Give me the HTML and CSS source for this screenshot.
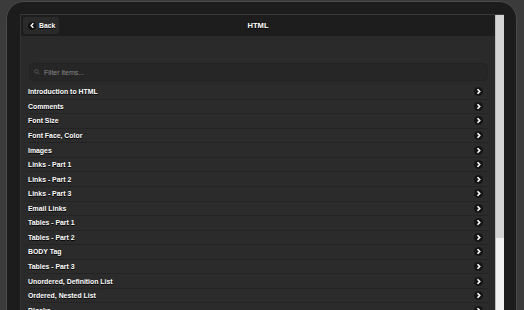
FILE: index.html
```html
<!DOCTYPE html>
<html>
<head>
    <meta http-equiv="Content-Type" content="text/html;charset=UTF-8"/>
    <title>HTML</title>
    <link rel="stylesheet" href="styles.css">
</head>
<body>
<div class="device">
    <div class="screen">
        <div class="main">
            <div class="header">
                <div class="back-btn">
                    <span class="icon-circle">
                        <svg width="7" height="7" viewBox="0 0 8 8"><path d="M5 1.5 L2.5 4 L5 6.5" fill="none" stroke="#fff" stroke-width="1.6"/></svg>
                    </span>
                    Back
                </div>
                <h1>HTML</h1>
            </div>
            <div class="content">
                <div class="filter">
                    <svg width="6" height="6" viewBox="0 0 10 10"><circle cx="4" cy="4" r="3" fill="none" stroke="#555" stroke-width="1.5"/><path d="M6.2 6.2 L9 9" stroke="#555" stroke-width="1.5"/></svg>
                    <span class="placeholder">Filter items...</span>
                </div>
                <ul class="list">
                    <li>Introduction to HTML</li>
                    <li>Comments</li>
                    <li>Font Size</li>
                    <li>Font Face, Color</li>
                    <li>Images</li>
                    <li>Links - Part 1</li>
                    <li>Links - Part 2</li>
                    <li>Links - Part 3</li>
                    <li>Email Links</li>
                    <li>Tables - Part 1</li>
                    <li>Tables - Part 2</li>
                    <li>BODY Tag</li>
                    <li>Tables - Part 3</li>
                    <li>Unordered, Definition List</li>
                    <li>Ordered, Nested List</li>
                    <li>Blocks</li>
                </ul>
            </div>
        </div>
        <div class="scrollbar"><div class="thumb"></div></div>
    </div>
</div>
</body>
</html>
```

FILE: styles.css
```css
body {
    margin: 0;
    background: #3a3b3a;
    font-family: "Liberation Sans", Arial, sans-serif;
    height: 310px;
    overflow: hidden;
}

.device {
    margin: 1px 7px 0 6px;
    height: 320px;
    background: #1c1c1c;
    border: 1px solid #4a4a4a;
    border-radius: 18px 18px 0 0;
    padding: 12px 12px 0 13px;
    box-sizing: border-box;
}

.screen {
    display: flex;
    height: 300px;
    border-top: 1px solid #3a3a3a;
    border-left: 1px solid #333;
    background: #2a2a2a;
    overflow: hidden;
}

.main {
    flex: 1;
}

.header {
    position: relative;
    height: 21px;
    background: #1d1d1d;
    display: flex;
    align-items: center;
    justify-content: center;
}

.header h1 {
    margin: 0;
    font-size: 7.6px;
    font-weight: bold;
    color: #fff;
    text-shadow: 0 1px 0 #000;
}

.back-btn {
    position: absolute;
    left: 2px;
    top: 2px;
    width: 36px;
    height: 17px;
    box-sizing: border-box;
    background: #2a2a2a;
    border-radius: 3px;
    display: flex;
    align-items: center;
    gap: 3px;
    padding-left: 5px;
    font-size: 6.8px;
    font-weight: bold;
    color: #fff;
    text-shadow: 0 1px 0 #000;
}

.icon-circle {
    width: 8px;
    height: 8px;
    border-radius: 50%;
    background: #111;
    display: flex;
    align-items: center;
    justify-content: center;
}

.content {
    padding: 27px 7px 0 7px;
}

.filter {
    height: 18px;
    box-sizing: border-box;
    background: #262626;
    border: 1px solid #232323;
    border-radius: 5px;
    display: flex;
    align-items: center;
    gap: 4px;
    padding-left: 4px;
    margin-left: 1px;
}

.placeholder {
    font-size: 7px;
    color: #8a8a8a;
}

.list {
    list-style: none;
    margin: 4px 0 0 0;
    padding: 0;
    border-radius: 5px 5px 0 0;
    background: #2b2b2b;
}

.list li {
    height: 14.57px;
    box-sizing: border-box;
    border-bottom: 1px solid #232323;
    display: flex;
    align-items: center;
    justify-content: space-between;
    padding: 0 5px 0 0;
    font-size: 6.9px;
    font-weight: bold;
    color: #fff;
    text-shadow: 0 1px 0 #000;
}

.list li::after {
    content: "";
    width: 9px;
    height: 9px;
    border-radius: 50%;
    background: #151515 url("data:image/svg+xml,%3Csvg xmlns='http://www.w3.org/2000/svg' viewBox='0 0 9 9'%3E%3Cpath d='M3.5 2.3 L5.7 4.5 L3.5 6.7' fill='none' stroke='white' stroke-width='1.6'/%3E%3C/svg%3E") center / 9px 9px no-repeat;
}

.scrollbar {
    width: 8px;
    background: #f1f1f1;
    border-left: 1px solid #bbb;
}

.thumb {
    height: 223px;
    background: #d4d4d4;
}
```
